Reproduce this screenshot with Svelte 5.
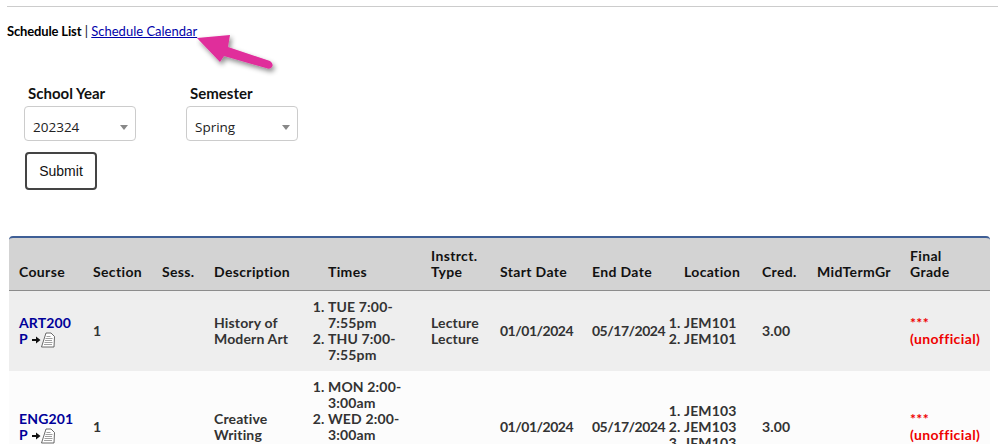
<script>
  const columns = [
    { label: "Course", width: 74 },
    { label: "Section", width: 69 },
    { label: "Sess.", width: 52 },
    { label: "Description", width: 114 },
    { label: "Times", width: 103 },
    { label: "Instrct. Type", width: 69 },
    { label: "Start Date", width: 92 },
    { label: "End Date", width: 92 },
    { label: "Location", width: 78 },
    { label: "Cred.", width: 55 },
    { label: "MidTermGr", width: 93 },
    { label: "Final Grade", width: 90 },
  ];

  const rows = [
    {
      course: "ART200P",
      description: "History of Modern Art",
      times: ["TUE 7:00-7:55pm", "THU 7:00-7:55pm"],
      types: ["Lecture", "Lecture"],
      locations: ["JEM101", "JEM101"],
    },
    {
      course: "ENG201P",
      description: "Creative Writing",
      times: ["MON 2:00-3:00am", "WED 2:00-3:00am", "FRI 2:00-3:00am"],
      types: [],
      locations: ["JEM103", "JEM103", "JEM103"],
    },
  ];
</script>

<div class="page">
  <hr />
  <p class="tabs"><b>Schedule List</b> | <a href="#calendar">Schedule Calendar</a></p>

  <svg class="pointer" width="90" height="50" viewBox="0 0 90 50" aria-hidden="true">
    <defs>
      <filter id="soft" x="-20%" y="-30%" width="150%" height="170%">
        <feDropShadow dx="2" dy="3" stdDeviation="2.5" flood-color="#000" flood-opacity="0.45" />
      </filter>
    </defs>
    <path d="M1 6 L34 3 L32 15 L74 29 Q78 32 76 35 Q74 38 70 36 L28 24 L24 30 Z" fill="#e02d9b" filter="url(#soft)" />
  </svg>

  <form class="filters" on:submit|preventDefault>
    <div class="fields">
      <label class="field">
        <span>School Year</span>
        <div class="select">
          <select><option>202324</option></select>
        </div>
      </label>
      <label class="field">
        <span>Semester</span>
        <div class="select">
          <select><option>Spring</option></select>
        </div>
      </label>
    </div>
    <button type="submit">Submit</button>
  </form>

  <table>
    <colgroup>
      {#each columns as col}
        <col style="width: {col.width}px" />
      {/each}
    </colgroup>
    <thead>
      <tr>
        {#each columns as col}
          <th>{col.label}</th>
        {/each}
      </tr>
    </thead>
    <tbody>
      {#each rows as row}
        <tr>
          <td class="course-cell">
            <a class="course" href="#course">{row.course}</a>
            <svg class="doc" width="24" height="16" viewBox="0 0 24 16" aria-hidden="true">
              <path d="M0 7h4V4.500l4.500 3.500-4.500 3.500V9H0z" fill="#111" />
              <path d="M14 1h5l3.500 3.500-.5 10.500H9.500z" fill="#fff" stroke="#444" stroke-width="0.8" />
              <path d="M14.500 4.500h4M13.500 6.500h7M13 8.500h7M12.500 10.500h8M12 12.500h8" stroke="#777" stroke-width="0.7" />
            </svg>
          </td>
          <td>1</td>
          <td></td>
          <td>{row.description}</td>
          <td>
            <ol>
              {#each row.times as time}
                <li>{time}</li>
              {/each}
            </ol>
          </td>
          <td>
            {#each row.types as type}
              <div>{type}</div>
            {/each}
          </td>
          <td class="date">01/01/2024</td>
          <td class="date">05/17/2024</td>
          <td>
            <ol>
              {#each row.locations as location}
                <li>{location}</li>
              {/each}
            </ol>
          </td>
          <td>3.00</td>
          <td></td>
          <td class="grade">***<br />(unofficial)</td>
        </tr>
      {/each}
    </tbody>
  </table>
</div>

<style>
  :global(body) {
    margin: 0;
    height: 444px;
    overflow: hidden;
    background: #fff;
  }

  .page {
    position: relative;
    padding-top: 6px;
    font-family: "Lato", "Liberation Sans", sans-serif;
    font-size: 14px;
    line-height: 16px;
    color: #333;
  }

  hr {
    margin: 0 0 0 7px;
    border: 0;
    border-top: 1px solid #ccc;
  }

  .tabs {
    margin: 16px 0 0 7px;
    font-size: 13px;
    color: #111;
  }

  .tabs b {
    color: #000;
    letter-spacing: -0.15px;
  }

  .tabs a {
    color: #00a;
  }

  .pointer {
    position: absolute;
    left: 196px;
    top: 32px;
  }

  .filters {
    margin: 46px 0 0 24px;
  }

  .fields {
    display: flex;
    gap: 50px;
  }

  .field {
    display: block;
    width: 112px;
  }

  .field span {
    display: block;
    margin: 0 0 5px 4px;
    font-size: 15px;
    font-weight: 700;
    color: #111;
  }

  .select {
    position: relative;
  }

  .select::after {
    content: "";
    position: absolute;
    right: 8px;
    top: 19px;
    border: 4px solid transparent;
    border-top: 5px solid #888;
    border-bottom: 0;
  }

  select {
    display: block;
    width: 112px;
    height: 35px;
    padding: 6px 8px 0;
    appearance: none;
    background: #fff;
    border: 1px solid #ccc;
    border-radius: 4px;
    font-family: "Open Sans", sans-serif;
    font-size: 13.500px;
    color: #222;
  }

  button {
    display: block;
    width: 72px;
    height: 38px;
    margin: 11px 0 0 1px;
    padding: 0;
    background: #fff;
    border: 2px solid #444;
    border-radius: 4px;
    font-family: "Liberation Sans", sans-serif;
    font-size: 14px;
    color: #111;
  }

  table {
    width: 981px;
    margin: 46px 0 0 9px;
    table-layout: fixed;
    border-collapse: separate;
    border-spacing: 0;
    font-weight: 700;
    letter-spacing: 0.15px;
  }

  th {
    padding: 10px;
    vertical-align: bottom;
    text-align: left;
    background: #d3d3d3;
    color: #111;
    letter-spacing: 0.35px;
    border-top: 2px solid #3f5f96;
    border-bottom: 1px solid #8c8c8c;
  }

  th:first-child {
    border-top-left-radius: 4px;
  }

  th:last-child {
    border-top-right-radius: 4px;
  }

  td {
    padding: 8px 10px;
    vertical-align: middle;
  }

  tbody tr:nth-child(odd) td {
    background: #eee;
  }

  tbody tr:nth-child(even) td {
    background: #fcfcfc;
  }

  ol {
    margin: 0;
    padding-left: 0;
  }

  td.course-cell {
    padding-right: 8px;
    overflow-wrap: anywhere;
  }

  .course {
    color: #009;
    text-decoration: none;
  }

  .doc {
    margin-left: 1px;
    vertical-align: -4px;
  }

  .date {
    white-space: nowrap;
    letter-spacing: -0.5px;
  }

  .grade {
    color: #e00;
    letter-spacing: 0.4px;
  }
</style>
